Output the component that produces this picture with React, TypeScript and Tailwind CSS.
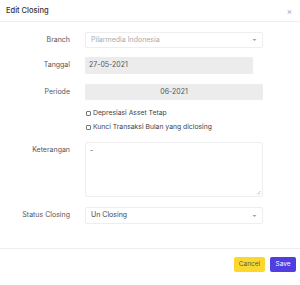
const font = { fontFamily: "Inter, 'Noto Sans', sans-serif" };

const Chevron = () => (
  <svg width="5" height="4" viewBox="0 0 5 4" className="text-gray-400">
    <path d="M0.5 1 L2.5 3 L4.5 1 Z" fill="currentColor" />
  </svg>
);

const Row = ({ label, children, className = "" }: { label: string; children: React.ReactNode; className?: string }) => (
  <div className={`flex items-start ${className}`}>
    <div className="w-[70px] text-right text-[7px] leading-[16px] text-[#555]">{label}</div>
    <div className="ml-[15px] w-[178px]">{children}</div>
  </div>
);

export default function App() {
  return (
    <div style={font} className="w-[300px] h-[285px] bg-white text-[#444]">
      <div className="h-[22px] flex items-center justify-between px-[6px] border-b border-[#eeeeee]">
        <span className="text-[7.5px] font-medium text-[#333]">Edit Closing</span>
        <span className="text-[8px] text-gray-400 mr-[2px]">×</span>
      </div>

      <div className="pt-[10px]">
        <Row label="Branch">
          <div className="h-[16px] border border-[#eeeeee] rounded-[2px] flex items-center justify-between px-[5px]">
            <span className="text-[7px] text-[#aaa]">Pilarmedia Indonesia</span>
            <Chevron />
          </div>
        </Row>

        <Row label="Tanggal" className="mt-[9px]">
          <div className="h-[17px] w-[168px] bg-[#ececec] rounded-[1px] flex items-center px-[4px] text-[7px] text-[#555]">
            27-05-2021
          </div>
        </Row>

        <Row label="Periode" className="mt-[10px]">
          <div className="h-[16px] bg-[#ececec] rounded-[1px] flex items-center justify-center text-[7px] text-[#555]">
            06-2021
          </div>
        </Row>

        <div className="ml-[86px] mt-[8px] flex flex-col gap-[4px]">
          {["Depresiasi Asset Tetap", "Kunci Transaksi Bulan yang diclosing"].map((t) => (
            <div key={t} className="flex items-center gap-[2px] h-[10px]">
              <span className="w-[5px] h-[5px] border border-[#777] rounded-[1px] bg-white" />
              <span className="text-[6.8px] text-[#444]">{t}</span>
            </div>
          ))}
        </div>

        <Row label="Keterangan" className="mt-[10px]">
          <div className="relative h-[55px] border border-[#eeeeee] rounded-[2px] px-[4px] pt-[3px] text-[7px] text-[#555]">
            -
            <svg width="5" height="5" viewBox="0 0 5 5" className="absolute right-[1px] bottom-[1px] text-gray-400">
              <path d="M1 4.5 L4.5 1 M3 4.5 L4.5 3" stroke="currentColor" strokeWidth="0.6" />
            </svg>
          </div>
        </Row>

        <Row label="Status Closing" className="mt-[10px]">
          <div className="h-[17px] border border-[#eeeeee] rounded-[2px] flex items-center justify-between px-[5px]">
            <span className="text-[7px] text-[#444]">Un Closing</span>
            <Chevron />
          </div>
        </Row>
      </div>

      <div className="mt-[24px] border-t border-[#eeeeee] flex justify-end gap-[5px] pt-[8px] pr-[4px]">
        <button className="h-[15px] w-[31px] bg-[#fcd82f] rounded-[2px] text-[6.5px] text-[#555]">Cancel</button>
        <button className="h-[15px] w-[26px] bg-[#4f3ee0] rounded-[2px] text-[6.5px] text-white">Save</button>
      </div>
    </div>
  );
}
